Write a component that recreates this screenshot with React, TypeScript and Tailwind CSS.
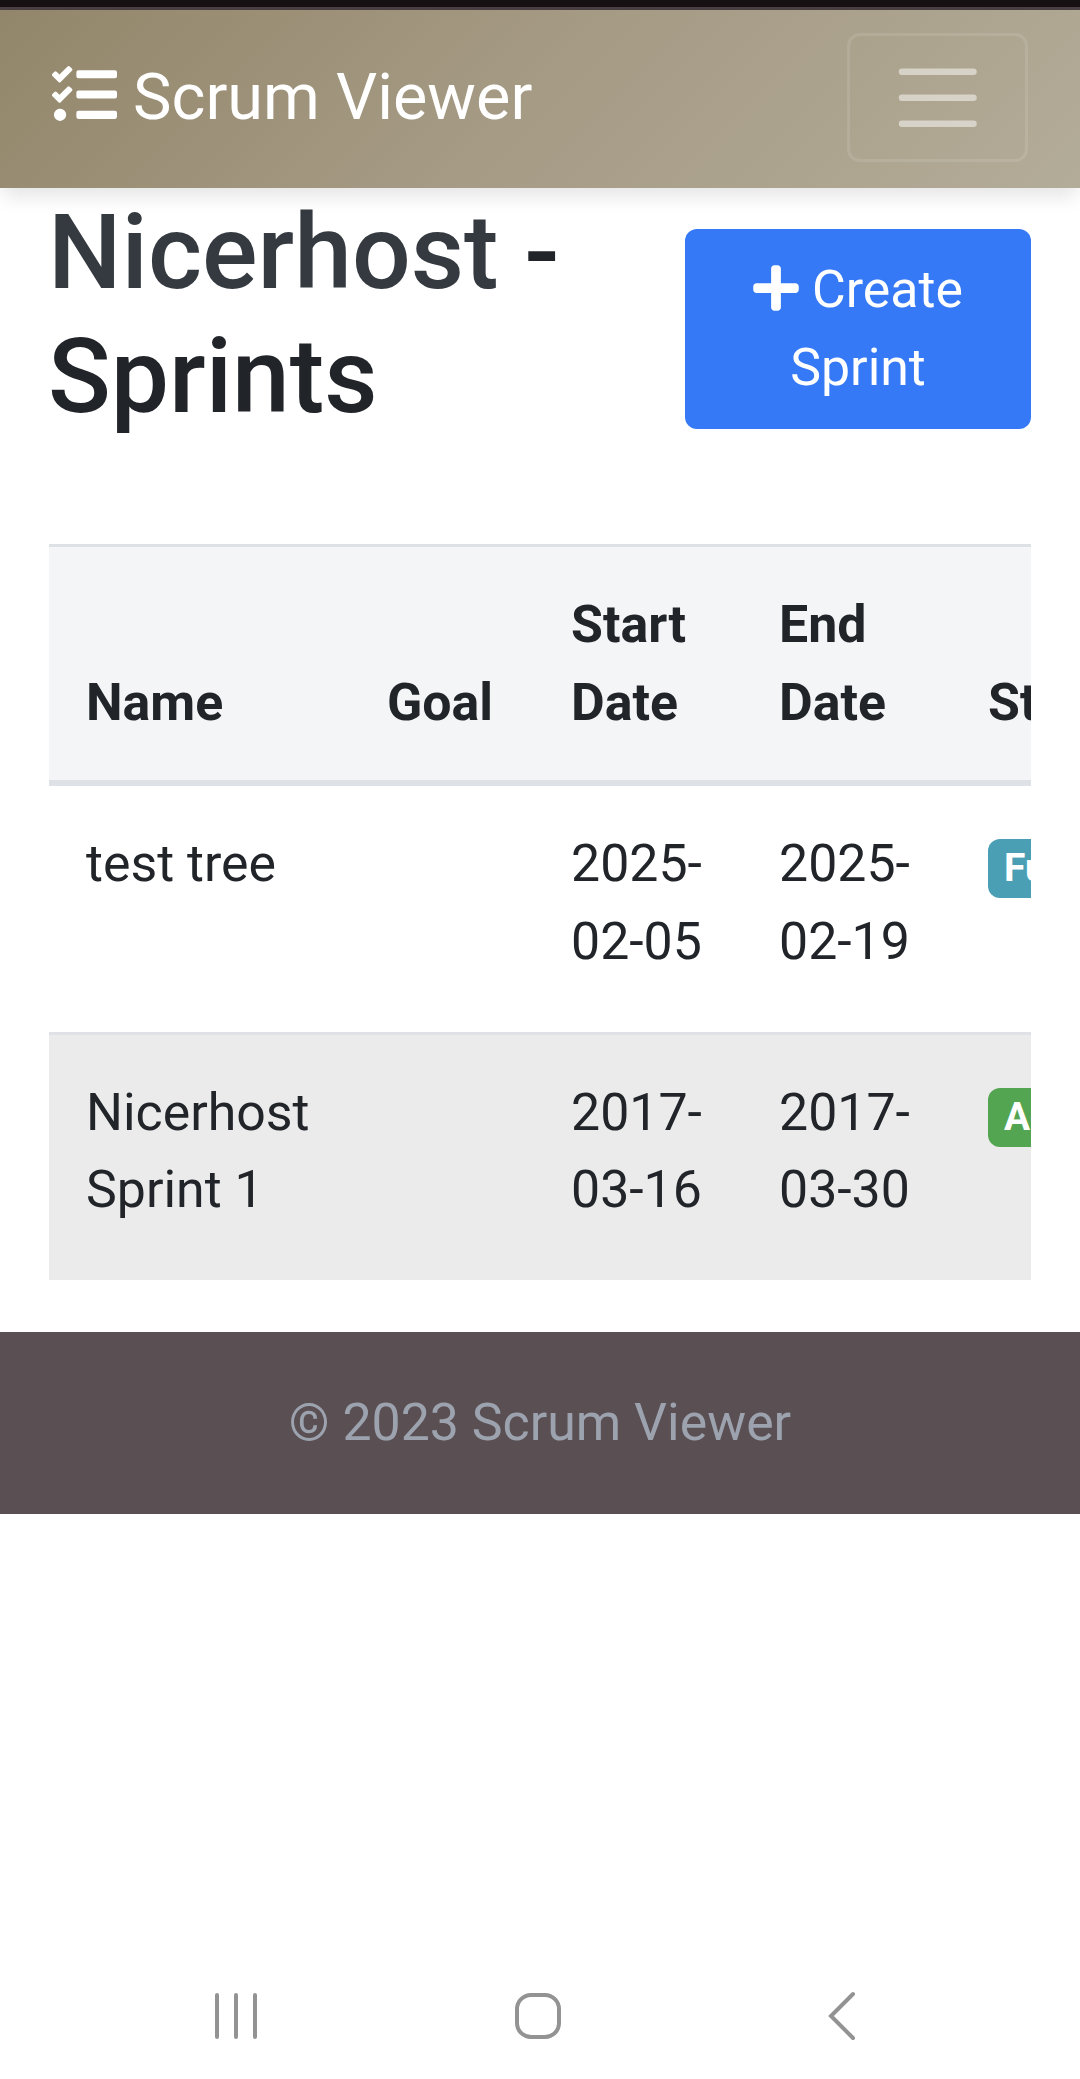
import { FaPlus, FaTasks } from "react-icons/fa";

type Sprint = {
  name: string;
  start: [string, string];
  end: [string, string];
  status: string;
  badge: string;
};

const sprints: Sprint[] = [
  { name: "test tree", start: ["2025-", "02-05"], end: ["2025-", "02-19"], status: "Future", badge: "bg-[#4b9fb5]" },
  { name: "Nicerhost Sprint 1", start: ["2017-", "03-16"], end: ["2017-", "03-30"], status: "Active", badge: "bg-[#54a551]" },
];

function Navbar() {
  return (
    <nav className="relative flex h-[178px] items-center justify-between bg-[linear-gradient(135deg,#92866a_0%,#a69b85_50%,#b3ac98_100%)] px-[52px] pb-[3px] shadow-[0_12px_18px_-3px_rgba(0,0,0,0.1)]">
      <a className="flex items-center gap-[16px] text-[64.8px] leading-[97px] text-white">
        <FaTasks className="relative -top-[3px] size-[65px]" />
        <span>Scrum Viewer</span>
      </a>
      <button className="flex h-[129px] w-[181px] items-center justify-center rounded-[13px] border-[3px] border-white/10">
        <svg viewBox="0 0 30 30" className="size-[97.5px]" fill="none">
          <path d="M4 7h22M4 15h22M4 23h22" stroke="rgba(255,255,255,0.5)" strokeWidth="2" strokeLinecap="round" />
        </svg>
      </button>
    </nav>
  );
}

function SprintTable() {
  return (
    <div className="overflow-hidden">
      <table className="w-[1290px] table-fixed border-collapse text-left text-[51.84px] leading-[77.76px]">
        <colgroup>
          <col className="w-[301px]" />
          <col className="w-[184px]" />
          <col className="w-[208px]" />
          <col className="w-[209px]" />
          <col />
        </colgroup>
        <thead>
          <tr className="h-[236px] bg-[#f4f5f7] align-bottom shadow-[inset_0_3px_0_#dee2e6]">
            {["Name", "Goal", "Start Date", "End Date", "Status"].map((label) => (
              <th key={label} className="pr-[39px] pb-[38px] pl-[37px] font-bold">
                {label}
              </th>
            ))}
          </tr>
        </thead>
        <tbody>
          {sprints.map((s, i) => {
            const cell = i === 0 ? "pt-[45px] pl-[37px]" : "pt-[41.6px] pl-[37px]";
            return (
              <tr
                key={s.name}
                className={
                  i === 0
                    ? "h-[252px] align-top shadow-[inset_0_6px_0_#dee2e6]"
                    : "h-[248px] bg-[#ebebeb] align-top shadow-[inset_0_3px_0_#dee2e6]"
                }
              >
                <td className={cell}>{s.name}</td>
                <td />
                <td className={cell}>
                  {s.start[0]}
                  <br />
                  {s.start[1]}
                </td>
                <td className={cell}>
                  {s.end[0]}
                  <br />
                  {s.end[1]}
                </td>
                <td className={cell}>
                  <span className={`inline-block rounded-[12px] px-[16px] pt-[9px] pb-[11px] text-[38.88px] leading-[39px] font-bold text-white ${s.badge}`}>
                    {s.status}
                  </span>
                </td>
              </tr>
            );
          })}
        </tbody>
      </table>
    </div>
  );
}

function SystemNav() {
  return (
    <div className="flex h-[126px] items-center pl-[213px] text-[#939393]">
      <svg width="46" height="48" viewBox="0 0 46 48" fill="none" stroke="currentColor" strokeWidth="4" strokeLinecap="round">
        <path d="M4 3v42M23 3v42M42 3v42" />
      </svg>
      <svg className="ml-[255px]" width="48" height="48" viewBox="0 0 48 48" fill="none" stroke="currentColor" strokeWidth="4">
        <rect x="3" y="3" width="42" height="42" rx="14" />
      </svg>
      <svg className="ml-[265px]" width="30" height="50" viewBox="0 0 30 50" fill="none" stroke="currentColor" strokeWidth="4" strokeLinecap="round">
        <path d="M26 3L4 25l22 22" />
      </svg>
    </div>
  );
}

export default function App() {
  return (
    <div className="flex h-[2079px] w-[1080px] flex-col overflow-hidden bg-white font-[Roboto,sans-serif] text-[#212529]">
      <div className="h-[10px] shrink-0 border-b-[3px] border-[#4a3f43] bg-[#171013]" />
      <Navbar />
      <main className="flex h-[1144px] flex-col px-[49px]">
        <div className="flex h-[356px] items-start justify-between">
          <h1 className="mt-[3px] -ml-px w-[560px] text-[103.68px] leading-[124px] font-medium">
            <span className="text-[#343a40]">Nicerhost</span> - Sprints
          </h1>
          <button className="mt-[41px] h-[200px] w-[346px] rounded-[12px] bg-[#3579f6] text-center text-[51.84px] leading-[77.76px] text-white">
            <FaPlus className="relative -top-[6px] inline h-[52px] w-[46px]" /> Create
            <br />
            Sprint
          </button>
        </div>
        <SprintTable />
      </main>
      <footer className="flex h-[182px] items-center justify-center bg-[#5a4f52] text-[51.84px] leading-[77.76px] text-[#9ca3af]">
        © 2023 Scrum Viewer
      </footer>
      <div className="grow" />
      <SystemNav />
    </div>
  );
}
